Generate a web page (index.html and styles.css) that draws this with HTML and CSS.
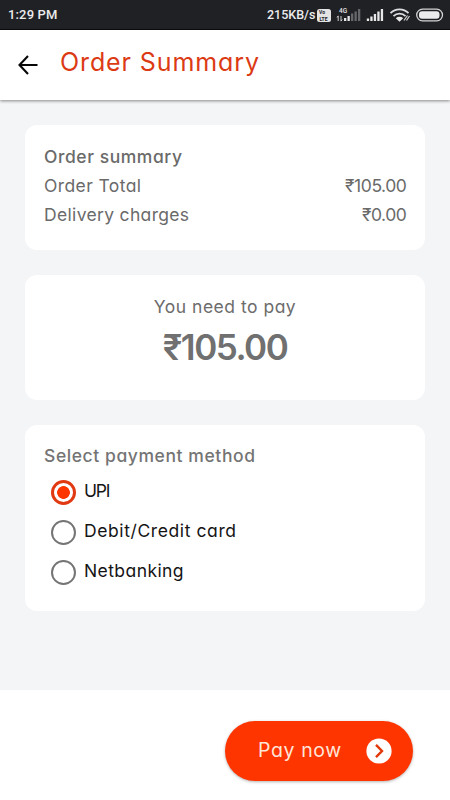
FILE: index.html
```html
<!DOCTYPE html>
<html lang="en">
<head>
<meta charset="utf-8">
<title>Order Summary</title>
<link rel="stylesheet" href="styles.css">
</head>
<body>
<div class="status">
  <span class="clock">1:29 PM</span>
  <span class="speed">215KB/s</span>
  <svg class="status-icons" width="130" height="30" viewBox="0 0 130 30">
    <rect x="2" y="9" width="14" height="13" rx="2.5" fill="#e4e4e5"/>
    <text x="4" y="14.2" class="volte">Vo</text>
    <text x="4.400" y="21" class="volte">LTE</text>
    <text x="24" y="13" class="fourg">4G</text>
    <path d="M23.2 21v-5m-1.2 1.5l1.2-1.7M26 16v5m1.2-1.5L26 21.2" stroke="#ddd" stroke-width=".9" fill="none"/>
    <path d="M29 18h2.3v3H29zM32.5 16h2.3v5h-2.3z" fill="#e8e8e9"/>
    <path d="M36 13.500h2.300v7.500H36zM39.500 11.500h2.300v9.500h-2.300zM43 9h2.300v12H43z" fill="#66676b"/>
    <path d="M51.800 18.500h2.300V21h-2.300zM55.300 16.500h2.300V21h-2.300zM58.800 14h2.300v7h-2.300zM62.300 11.500h2.300V21h-2.300zM65.800 9h2.300v12h-2.300z" fill="#e8e8e9"/>
    <g fill="none" stroke="#dedee0" stroke-width="1.800"><path d="M75.500 13.200a12.500 12.500 0 0 1 18 0M78.500 16.200a8.500 8.500 0 0 1 12 0"/></g>
    <path d="M80.800 18.200a5.500 5.500 0 0 1 7.400 0l-3.700 3.600z" fill="#e8e8e9"/>
    <path d="M89 20.500l3.500-5M91.500 20.500l3-4.500" stroke="#c8c8ca" stroke-width="1.300"/>
    <rect x="101.700" y="9.200" width="25.800" height="11.600" rx="5.800" fill="none" stroke="#d5d5d6" stroke-width="1.300"/>
    <rect x="104" y="11.300" width="20.500" height="7.400" rx="3" fill="#ececed"/>
  </svg>
</div>
<header class="header">
  <svg class="back" width="20" height="20" viewBox="0 0 20 20"><path d="M19.500 10H1.800M10 1L1.500 10l8.500 9" fill="none" stroke="#080808" stroke-width="2.100"/></svg>
  <h1>Order Summary</h1>
</header>
<main class="content">
  <section class="card summary">
    <h2 class="t-summary">Order summary</h2>
    <div class="row"><span class="t-total">Order Total</span><span class="price">₹105.00</span></div>
    <div class="row"><span class="t-delivery">Delivery charges</span><span class="price">₹0.00</span></div>
  </section>
  <section class="card due">
    <div class="t-need">You need to pay</div>
    <div class="amount">₹105.00</div>
  </section>
  <section class="card methods">
    <h2 class="t-select">Select payment method</h2>
    <div class="option"><span class="radio on"></span><span class="t-upi">UPI</span></div>
    <div class="option"><span class="radio"></span><span class="t-debit">Debit/Credit card</span></div>
    <div class="option"><span class="radio"></span><span class="t-net">Netbanking</span></div>
  </section>
</main>
<footer class="footer">
  <button class="pay"><span>Pay now</span>
    <svg width="26" height="26" viewBox="0 0 26 26"><circle cx="13" cy="13" r="12.600" fill="#fff"/><path d="M10 6.800l6 6.200-6 6.200" fill="none" stroke="#e33607" stroke-width="2.400"/></svg>
  </button>
</footer>
</body>
</html>
```
FILE: styles.css
```css
* { box-sizing: border-box; }
body {
  margin: 0;
  width: 450px;
  height: 800px;
  overflow: hidden;
  display: flex;
  flex-direction: column;
  background: #f4f5f7;
  color: #6c6c6c;
  font-family: Inter, "Noto Sans", sans-serif;
  font-feature-settings: "cv11";
  font-size: 17.5px;
  font-weight: 400;
  line-height: 29px;
}
h1, h2 { margin: 0; }
.status {
  height: 30px;
  flex: none;
  display: flex;
  align-items: center;
  background: #202125;
  border-bottom: 1px solid #0c0c0d;
  color: #ececed;
  font: 500 13px/30px Roboto, sans-serif;
  padding-left: 8px;
}
.clock { width: 259px; letter-spacing: .15px; }
.speed { width: 48px; font-size: 12.5px; }
.volte { font: 700 5px/1 Roboto, sans-serif; fill: #202125; }
.fourg { font: 500 6.500px Roboto, sans-serif; fill: #e4e4e5; }
.header {
  height: 70px;
  flex: none;
  display: flex;
  background: #fff;
  box-shadow: 0 1px 3px rgba(0, 0, 0, .45);
  padding: 17px 0 0 18px;
}
.back { margin: 8px 22px 0 0; }
h1 { color: #dc3a14; font-weight: 400; font-size: 25px; line-height: 31px; letter-spacing: .9px; white-space: nowrap; }
.content { height: 590px; flex: none; padding: 25px; display: flex; flex-direction: column; gap: 25px; }
.card { background: #fff; border-radius: 12px; height: 125px; padding: 17px 19px; }
h2 { font-size: 17.5px; font-weight: 500; line-height: 29px; }
.t-summary { letter-spacing: .55px; line-height: 28px; }
.summary { padding-top: 18px; color: #6a6a6a; }
.t-total { letter-spacing: .4px; }
.t-delivery { letter-spacing: .33px; }
.price { letter-spacing: -.45px; margin-right: -.45px; }
.t-need { letter-spacing: .5px; }
.row { display: flex; justify-content: space-between; }
.due { text-align: center; }
.amount { font-size: 35px; font-weight: 600; line-height: 52px; letter-spacing: -1.5px; color: #707070; }
.methods { height: 186px; padding-top: 16px; }
.t-select { color: #747474; margin-bottom: 2px; letter-spacing: .58px; }
.option { display: flex; height: 40px; align-items: center; padding-left: 7px; color: #141414; }
.option span:last-child { margin: -4px 0 0 8px; }
.option .t-upi { letter-spacing: -1.2px; }
.t-debit { letter-spacing: .6px; }
.t-net { letter-spacing: .42px; }
.radio { width: 25px; height: 25px; border: 2.500px solid #757575; border-radius: 50%; }
.radio.on { border-color: #e13a12; border-width: 3px; background: radial-gradient(circle, #ff3500 6px, #fff 6.700px); }
.footer { height: 110px; flex: none; background: #fff; padding: 31px 37px 0 225px; }
.pay {
  width: 188px;
  height: 60px;
  border: 0;
  border-radius: 30px;
  background: #ff3500;
  color: #ffe4d8;
  font: 400 19.500px/28px Inter, sans-serif;
  font-feature-settings: "cv11";
  letter-spacing: .6px;
  box-shadow: 0 1px 3px rgba(0, 0, 0, .3);
  display: flex;
  align-items: center;
  padding: 0 21px 0 33px;
  justify-content: space-between;
}
.pay span { margin-top: -3px; }
```
